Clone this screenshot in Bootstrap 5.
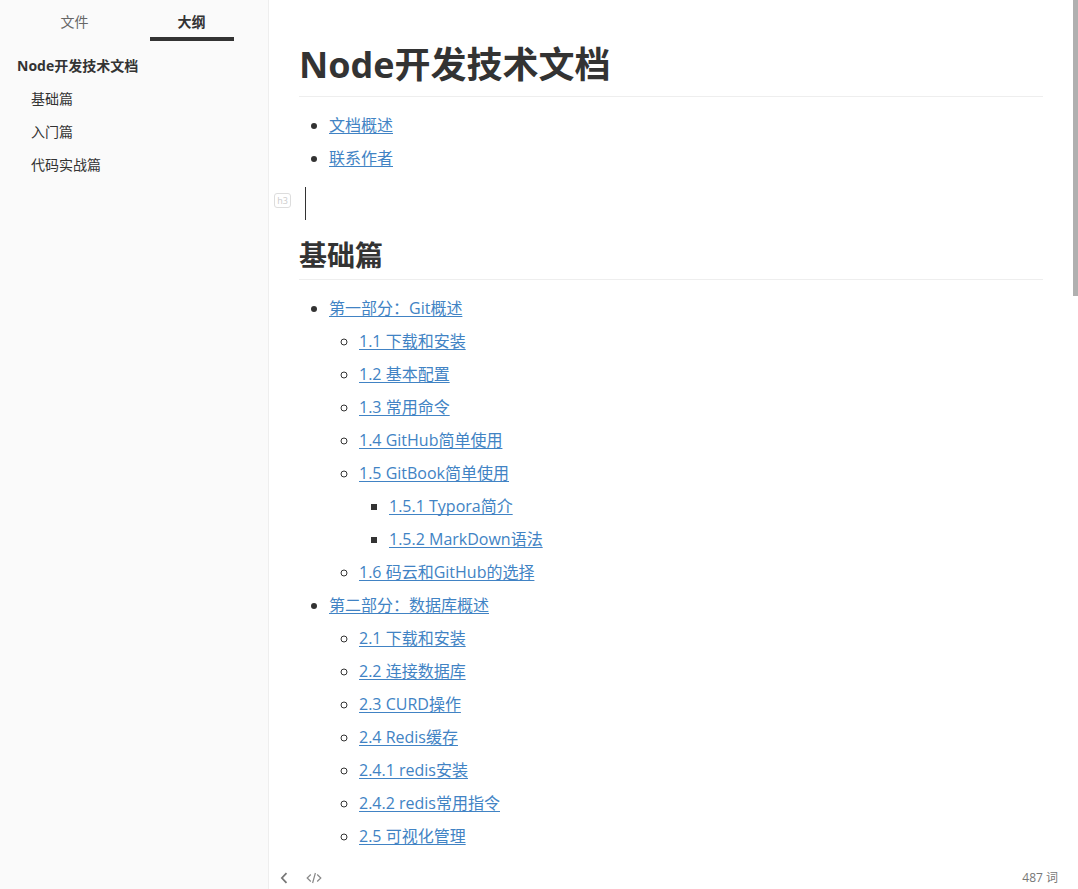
<!DOCTYPE html>
<html lang="zh-CN">
<head>
<meta charset="utf-8">
<meta name="viewport" content="width=device-width, initial-scale=1">
<title>Node开发技术文档</title>
<link href="https://cdn.jsdelivr.net/npm/bootstrap@5.3.0/dist/css/bootstrap.min.css" rel="stylesheet">
<style>
  body { font-family: "Open Sans", "Noto Sans CJK SC", sans-serif; font-size: 16px; line-height: 33px; color: #333; background: #fff; }
  a { color: #4183c4; text-decoration-thickness: 1px; text-underline-offset: 2px; text-decoration-skip-ink: none; }
  .sidebar { width: 269px; background: #fafafa; border-right: 1px solid #eee; font-size: 14px; }
  .tabs { gap: 33px; height: 41px; padding: 4px 2px 0 0; }
  .tab-btn { width: 84px; border: 0; border-bottom: 4px solid transparent; background: none; color: #666; padding: 2px 0 0; line-height: 31px; }
  .tab-btn.active { color: #333; border-color: #333; font-weight: 700; }
  .outline { padding: 8px 17px; }
  .outline a { color: #333; text-decoration: none; display: block; }
  .outline ul { padding-left: 14px; }
  .article { padding: 41px 35px 0 30px; }
  .article h1, .article h2 { font-weight: 700; border-bottom: 1px solid #eee; margin-bottom: 12px; }
  .article h1 { font-size: 36px; line-height: 48px; padding-bottom: 7px; }
  .article h2 { font-size: 28px; line-height: 36px; padding-bottom: 6px; }
  .article ul { padding-left: 30px; margin-bottom: 12px; }
  .article ul ul { margin-bottom: 0; }
  .edit-line { height: 33px; padding-left: 6px; margin-bottom: 17px; }
  .caret { width: 1px; background: #333; }
  .level-tag { left: -25px; top: 6px; width: 17px; height: 15px; border: 1px solid #ddd; border-radius: 3px; color: #ccc; font-size: 9px; line-height: 13px; }
  .scroll-thumb { width: 5px; height: 33.3%; background: #b0b0b0; }
  .statusbar { height: 24px; padding: 1px 20px 0 7px; font-size: 12px; line-height: 23px; color: #777; }
  .statusbar button { width: 16px; height: 23px; padding: 0; border: 0; background: none; color: #777; }
  .statusbar .source-btn { margin-left: 14px; color: #888; }
</style>
</head>
<body>
<div class="d-flex vh-100 overflow-hidden">
  <aside class="sidebar flex-shrink-0">
    <div class="tabs d-flex justify-content-center">
      <button type="button" class="tab-btn">文件</button>
      <button type="button" class="tab-btn active">大纲</button>
    </div>
    <nav class="outline">
      <a href="#top" class="fw-bold">Node开发技术文档</a>
      <ul class="list-unstyled">
        <li><a href="#basic">基础篇</a></li>
        <li><a href="#intro">入门篇</a></li>
        <li><a href="#practice">代码实战篇</a></li>
      </ul>
    </nav>
  </aside>
  <div class="d-flex flex-column flex-grow-1 position-relative">
    <main class="article flex-grow-1 overflow-hidden">
      <h1 id="top">Node开发技术文档</h1>
      <ul>
        <li><a href="#about">文档概述</a></li>
        <li><a href="#contact">联系作者</a></li>
      </ul>
      <div class="edit-line d-flex position-relative">
        <span class="level-tag position-absolute text-center">h3</span>
        <span class="caret"></span>
      </div>
      <h2 id="basic">基础篇</h2>
      <ul>
        <li><a href="#p1">第一部分：Git概述</a>
          <ul>
            <li><a href="#s11">1.1 下载和安装</a></li>
            <li><a href="#s12">1.2 基本配置</a></li>
            <li><a href="#s13">1.3 常用命令</a></li>
            <li><a href="#s14">1.4 GitHub简单使用</a></li>
            <li><a href="#s15">1.5 GitBook简单使用</a>
              <ul>
                <li><a href="#s151">1.5.1 Typora简介</a></li>
                <li><a href="#s152">1.5.2 MarkDown语法</a></li>
              </ul>
            </li>
            <li><a href="#s16">1.6 码云和GitHub的选择</a></li>
          </ul>
        </li>
        <li><a href="#p2">第二部分：数据库概述</a>
          <ul>
            <li><a href="#s21">2.1 下载和安装</a></li>
            <li><a href="#s22">2.2 连接数据库</a></li>
            <li><a href="#s23">2.3 CURD操作</a></li>
            <li><a href="#s24">2.4 Redis缓存</a></li>
            <li><a href="#s241">2.4.1 redis安装</a></li>
            <li><a href="#s242">2.4.2 redis常用指令</a></li>
            <li><a href="#s25">2.5 可视化管理</a></li>
          </ul>
        </li>
      </ul>
    </main>
    <div class="scroll-thumb position-absolute top-0 end-0"></div>
    <footer class="statusbar d-flex align-items-center">
      <button type="button" class="d-flex align-items-center justify-content-center" aria-label="收起侧栏">
        <svg width="8" height="12" viewBox="0 0 8 12" fill="none" stroke="currentColor" stroke-width="1.8"><path d="M6.5 1.2 1.9 6l4.6 4.8"/></svg>
      </button>
      <button type="button" class="source-btn d-flex align-items-center justify-content-center" aria-label="源代码模式">
        <svg width="16" height="12" viewBox="0 0 16 12" fill="none" stroke="currentColor" stroke-width="1.2"><path d="M4.8 2.5 1.2 6l3.6 3.5M11.2 2.5 14.8 6l-3.6 3.5M9.4 1 6.6 11"/></svg>
      </button>
      <span class="ms-auto">487 词</span>
    </footer>
  </div>
</div>
<script src="https://cdn.jsdelivr.net/npm/bootstrap@5.3.0/dist/js/bootstrap.bundle.min.js"></script>
</body>
</html>
